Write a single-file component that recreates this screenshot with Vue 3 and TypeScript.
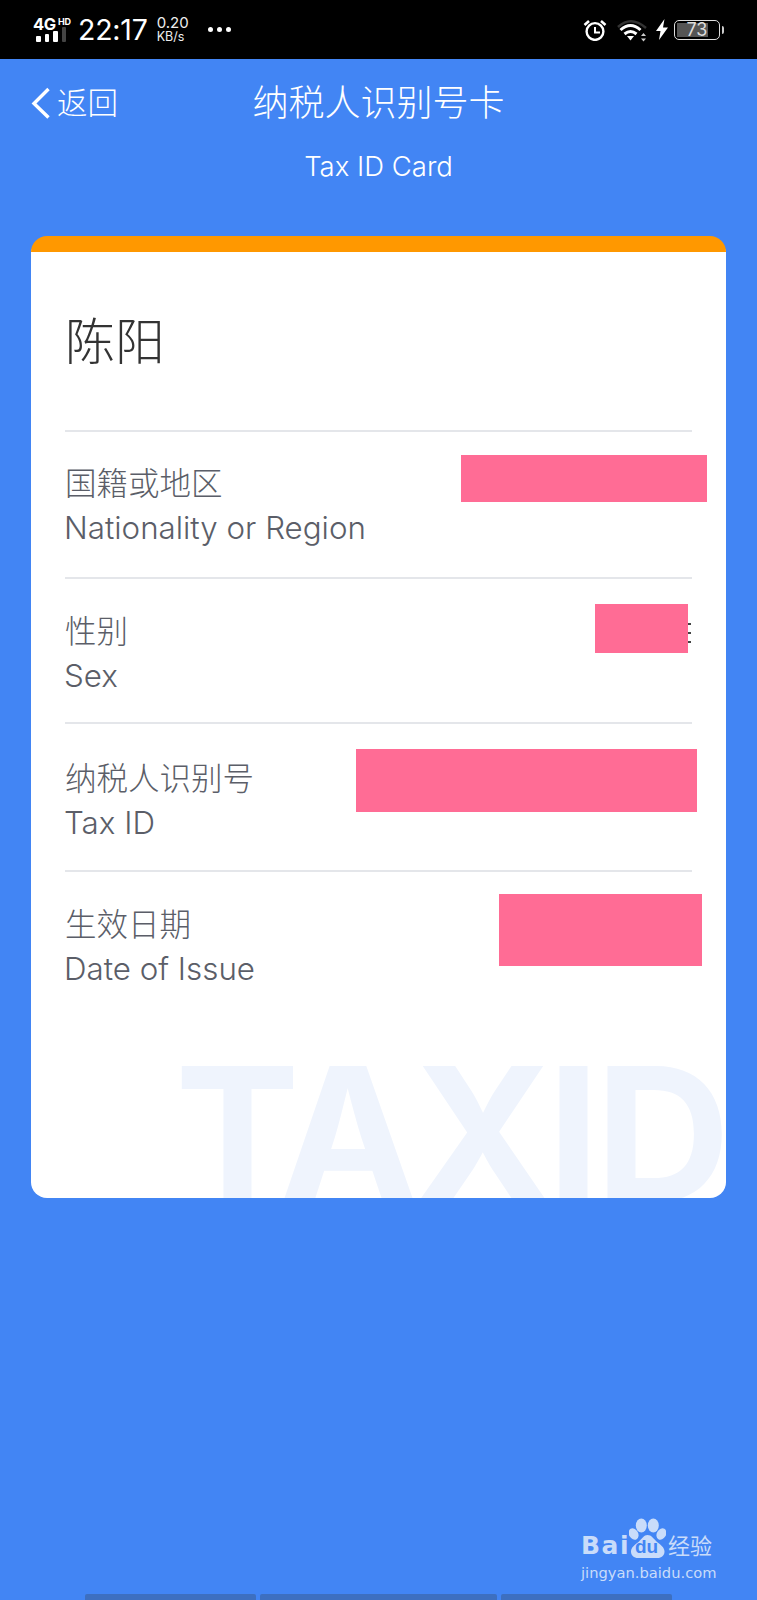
<script setup lang="ts">
interface Field {
  zh: string;
  en: string;
  height: number;
  pad: number;
  remnant?: boolean;
  mask: { left: number; top: number; width: number; height: number };
}

// mask offsets are relative to each row, they hide the personal data
const fields: Field[] = [
  { zh: '国籍或地区', en: 'Nationality or Region', height: 147, pad: 29, mask: { left: 396, top: 23, width: 246, height: 47 } },
  { zh: '性别', en: 'Sex', height: 145, pad: 30, remnant: true, mask: { left: 530, top: 25, width: 93, height: 49 } },
  { zh: '纳税人识别号', en: 'Tax ID', height: 148, pad: 32, mask: { left: 291, top: 25, width: 341, height: 63 } },
  { zh: '生效日期', en: 'Date of Issue', height: 146, pad: 30, mask: { left: 434, top: 22, width: 203, height: 72 } },
];

const bottomTabs = [171, 237, 171];
</script>

<template>
  <div class="page">
    <div class="status-bar">
      <div class="status-left">
        <div class="signal">
          <div class="net">4G<span class="hd">HD</span></div>
          <div class="bars">
            <i class="bar b1"></i>
            <i class="bar b2"></i>
            <i class="bar b3"></i>
            <i class="bar b4"></i>
          </div>
        </div>
        <span class="clock">22:17</span>
        <div class="speed">
          <span>0.20</span>
          <span class="unit">KB/s</span>
        </div>
        <div class="dots"><i></i><i></i><i></i></div>
      </div>
      <div class="status-right">
        <svg width="24" height="22" viewBox="0 0 24 22" fill="none" stroke="#fff">
          <circle cx="12" cy="12.5" r="8.4" stroke-width="2.4" />
          <path d="M12 8v5.5h5" stroke-width="2" />
          <path d="M1.5 6 6 2M22.5 6 18 2" stroke-width="2.6" />
        </svg>
        <svg class="wifi" width="30" height="24" viewBox="0 0 30 24" fill="none" stroke="#fff">
          <path d="M1 9Q14-3 29 10" stroke="#333" stroke-width="2.5" />
          <path d="M3.5 12Q13.5 3 23.5 12" stroke-width="3" />
          <path d="M7.5 16Q13.5 11 19.5 16" stroke-width="3" />
          <path d="M10 18h7l-3.5 4.5z" fill="#fff" stroke="none" />
          <path d="M26.5 15l-2.5 3h5zM26.5 23.5l-2.5-3h5z" fill="#ccc" stroke="none" />
        </svg>
        <svg class="bolt" width="12" height="21" viewBox="0 0 12 21">
          <path d="M8.5 0 0 12h4.5L3 21l9-12.5H7z" fill="#fff" />
        </svg>
        <div class="battery">
          <div class="level"></div>
          <span>73</span>
        </div>
        <i class="battery-tip"></i>
      </div>
    </div>

    <header class="nav">
      <div class="back">
        <svg width="20" height="32" viewBox="0 0 20 32" fill="none">
          <path d="M17.5 2 3 16.5 17.5 30.5" stroke="#fff" stroke-width="3.4" />
        </svg>
        <span>返回</span>
      </div>
      <h1>纳税人识别号卡</h1>
    </header>
    <p class="subtitle">Tax ID Card</p>

    <section class="card">
      <div class="watermark">TAXID</div>
      <div class="card-body">
        <h2 class="name">陈阳</h2>
        <div
          v-for="f in fields"
          :key="f.en"
          class="row"
          :style="{ height: f.height + 'px', paddingTop: f.pad + 'px' }"
        >
          <div class="zh">{{ f.zh }}</div>
          <div class="en">{{ f.en }}</div>
          <div v-if="f.remnant" class="remnant"><i></i><i></i><i></i></div>
          <div
            class="mask"
            :style="{
              left: f.mask.left + 'px',
              top: f.mask.top + 'px',
              width: f.mask.width + 'px',
              height: f.mask.height + 'px',
            }"
          ></div>
        </div>
      </div>
    </section>

    <div class="logo">
      <div class="logo-main">
        <span class="bai">Bai</span>
        <span class="paw-wrap">
          <svg width="37" height="40" viewBox="0 0 37 40" fill="#c9dcfa">
            <ellipse cx="12.3" cy="7.5" rx="5.5" ry="7" />
            <ellipse cx="24.3" cy="7.5" rx="5.5" ry="7" />
            <ellipse cx="4.6" cy="16" rx="4.6" ry="6" transform="rotate(-30 4.6 16)" />
            <ellipse cx="32.4" cy="16" rx="4.6" ry="6" transform="rotate(30 32.4 16)" />
            <path d="M18.5 17c4 0 6 3.5 9 6.500 4 3 8 6 8 10 0 4-3 6.500-7 6.500H9c-4 0-7-2.500-7-6.500 0-4 4-7 8-10 3-3 5-6.500 8.500-6.500z" />
          </svg>
          <span class="du">du</span>
        </span>
        <span class="jy">经验</span>
      </div>
      <div class="logo-url">jingyan.baidu.com</div>
    </div>

    <div class="bottom-tabs">
      <i v-for="(w, i) in bottomTabs" :key="i" :style="{ width: w + 'px' }"></i>
    </div>
  </div>
</template>

<style>
html,
body {
  margin: 0;
  background: #4285f4;
}
</style>

<style scoped>
.page {
  position: relative;
  width: 757px;
  height: 1600px;
  overflow: hidden;
  background: #4285f4;
  font-family: 'Inter', 'Noto Sans CJK SC', sans-serif;
  color: #fff;
}

.status-bar {
  height: 59px;
  background: #000;
  display: flex;
  justify-content: space-between;
  align-items: center;
  padding: 0 33px 0 33px;
  box-sizing: border-box;
}
.status-left,
.status-right {
  display: flex;
  align-items: center;
}
.signal {
  width: 45px;
}
.net {
  display: flex;
  font-size: 16.5px;
  font-weight: 700;
  line-height: 14px;
  letter-spacing: -0.3px;
}
.hd {
  font-size: 9px;
  line-height: 9px;
  margin-left: 2px;
}
.bars {
  display: flex;
  align-items: flex-end;
  gap: 4px;
  height: 13px;
  margin: -2px 0 0 3px;
}
.bar {
  width: 4.5px;
  background: #fff;
  border-radius: 1px;
}
.b1 {
  height: 6px;
}
.b2 {
  height: 8px;
}
.b3 {
  height: 11px;
}
.b4 {
  height: 15px;
  background: #444;
}
.clock {
  font-size: 28.5px;
  letter-spacing: -0.2px;
}
.speed {
  display: flex;
  flex-direction: column;
  font-size: 15px;
  line-height: 14px;
  margin-left: 9px;
  color: #eee;
}
.unit {
  font-size: 12.5px;
}
.dots {
  display: flex;
  gap: 4px;
  margin-left: 19px;
}
.dots i {
  width: 5px;
  height: 5px;
  background: #fff;
  border-radius: 50%;
}

.wifi {
  margin-left: 10px;
}
.bolt {
  margin-left: 9px;
}
.battery {
  position: relative;
  width: 46px;
  height: 20px;
  margin-left: 6px;
  border: 1.5px solid #ddd;
  border-radius: 5px;
  box-sizing: border-box;
  font-size: 18px;
  line-height: 17px;
  text-align: center;
  color: #ddd;
}
.battery .level {
  position: absolute;
  left: 2px;
  top: 2px;
  bottom: 2px;
  width: 31px;
  background: #555;
}
.battery span {
  position: relative;
}
.battery-tip {
  width: 2px;
  height: 8px;
  margin-left: 2px;
  background: #ccc;
  border-radius: 0 2px 2px 0;
}

.nav {
  display: grid;
  grid-template-columns: 1fr auto 1fr;
  align-items: center;
  padding: 20px 31px 0;
  height: 48px;
}
.back {
  display: flex;
  align-items: center;
  gap: 6px;
  font-size: 30.5px;
  font-weight: 300;
  line-height: 48px;
}
h1 {
  margin: 0;
  font-size: 36px;
  font-weight: 300;
  line-height: 48px;
}
.subtitle {
  margin: 21px 0 0;
  font-size: 27.5px;
  font-weight: 300;
  line-height: 36px;
  text-align: center;
}

.card {
  position: relative;
  margin: 52px 31px 0;
  width: 695px;
  height: 962px;
  box-sizing: border-box;
  border-top: 16px solid #ff9800;
  border-radius: 16px;
  background: #fff;
  overflow: hidden;
}
.watermark {
  position: absolute;
  left: 144px;
  top: 789px;
  font-size: 187px;
  font-weight: 700;
  line-height: 1;
  letter-spacing: -4.5px;
  white-space: nowrap;
  color: #eff4fd;
}
.card-body {
  position: relative;
  padding: 0 34px;
}
.name {
  margin: 0;
  padding-top: 64px;
  height: 114px;
  font-size: 50px;
  font-weight: 300;
  line-height: 52px;
  color: #333;
}
.row {
  position: relative;
  box-sizing: border-box;
  border-top: 2px solid #e4e6ea;
  color: #5b5e68;
  font-size: 31.5px;
  font-weight: 300;
  line-height: 45px;
}
.en {
  font-size: 31.3px;
  margin-left: -1px;
}
.mask {
  position: absolute;
  background: #ff6c95;
}
.remnant {
  position: absolute;
  left: 623px;
  top: 44px;
  display: flex;
  flex-direction: column;
  gap: 7px;
}
.remnant i {
  display: block;
  width: 3px;
  height: 2px;
  background: #444;
}

.logo {
  position: absolute;
  left: 581px;
  top: 1518px;
  color: #c9dcfa;
}
.logo-main {
  display: flex;
  align-items: flex-end;
  height: 40px;
  white-space: nowrap;
}
.bai {
  font-family: 'DejaVu Sans', sans-serif;
  font-size: 25px;
  font-weight: 700;
  line-height: 24px;
  letter-spacing: 1.5px;
}
.paw-wrap {
  position: relative;
  display: block;
  height: 40px;
  margin-left: -1px;
}
.paw-wrap svg {
  display: block;
}
.du {
  position: absolute;
  left: 6px;
  bottom: 2px;
  font-family: 'Liberation Sans', sans-serif;
  font-size: 19px;
  font-weight: 700;
  line-height: 18px;
  color: #4285f4;
}
.jy {
  flex: none;
  font-size: 22px;
  line-height: 24px;
  margin-left: 2px;
}
.logo-url {
  font-family: 'DejaVu Sans', sans-serif;
  font-size: 14.7px;
  line-height: 20px;
  margin-top: 5px;
  white-space: nowrap;
}

.bottom-tabs {
  position: absolute;
  left: 85px;
  bottom: 0;
  display: flex;
  gap: 4px;
}
.bottom-tabs i {
  height: 6px;
  background: #3d6fc0;
  border-radius: 2px 2px 0 0;
}
</style>
